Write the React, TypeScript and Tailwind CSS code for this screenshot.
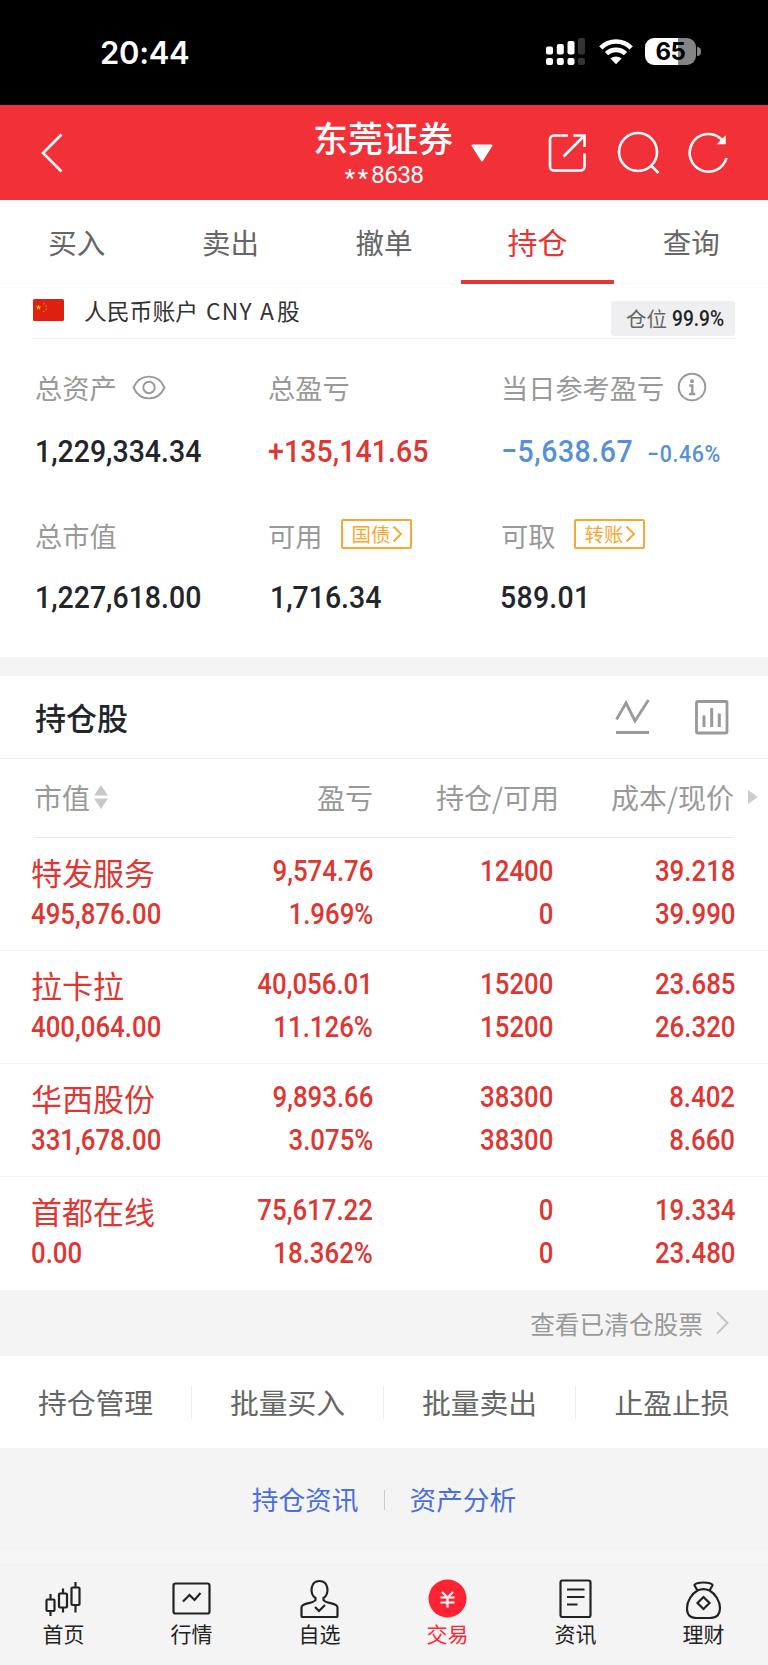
import type { ReactNode } from 'react';
import { clsx } from 'clsx';

const tabs = ['买入', '卖出', '撤单', '持仓', '查询'];

const holdings = [
  { name: '特发服务', value: '495,876.00', profit: '9,574.76', rate: '1.969%', amount: '12400', usable: '0', cost: '39.218', price: '39.990' },
  { name: '拉卡拉', value: '400,064.00', profit: '40,056.01', rate: '11.126%', amount: '15200', usable: '15200', cost: '23.685', price: '26.320' },
  { name: '华西股份', value: '331,678.00', profit: '9,893.66', rate: '3.075%', amount: '38300', usable: '38300', cost: '8.402', price: '8.660' },
  { name: '首都在线', value: '0.00', profit: '75,617.22', rate: '18.362%', amount: '0', usable: '0', cost: '19.334', price: '23.480' },
];

const actions = ['持仓管理', '批量买入', '批量卖出', '止盈止损'];

// Narrow figures, anchored to one side
function Num({ children, right, className }: { children: ReactNode; right?: boolean; className?: string }) {
  return (
    <span
      className={clsx(
        'inline-block whitespace-nowrap font-[Roboto,sans-serif] font-medium scale-x-[0.89]',
        right ? 'origin-right' : 'origin-left',
        className
      )}
    >
      {children}
    </span>
  );
}

function StatusBar() {
  return (
    <div className="h-[105px] bg-black flex items-start justify-between pl-[100px] pr-[67px] text-white font-[Inter,sans-serif]">
      <span className="mt-[33px] text-[31px] leading-[40px] font-semibold tracking-[-0.3px]">20:44</span>
      <div className="mt-[38px] flex items-center">
        <svg width="39" height="27" viewBox="0 0 39 27" fill="#fff">
          <rect x="0" y="8.500" width="7" height="8" rx="2" />
          <rect x="10.800" y="6" width="7" height="10.500" rx="2" />
          <rect x="21.500" y="3" width="7" height="13.500" rx="2" />
          <rect x="32" y="0" width="7" height="16.500" rx="2" fill="#333" />
          <rect x="0" y="20" width="7" height="7" rx="2" />
          <rect x="10.800" y="20" width="7" height="7" rx="2" />
          <rect x="21.500" y="20" width="7" height="7" rx="2" />
          <rect x="32" y="20" width="7" height="7" rx="2" fill="#333" />
        </svg>
        <svg className="ml-[13px]" width="36" height="27" viewBox="0 0 36 27" fill="none" stroke="#fff" strokeWidth="4.600">
          <path d="M2.800 9.800C11.300 1.300 24.700 1.300 33.200 9.800" />
          <path d="M8.500 15.700C13.800 10.600 22.200 10.600 27.500 15.700" />
          <path d="M18 26.200L12.400 20.600C15.600 17.700 20.400 17.700 23.600 20.600Z" fill="#fff" stroke="none" />
        </svg>
        <div className="ml-[11px] w-[51px] h-[27px] rounded-[9px] bg-linear-to-r from-white from-65% to-[#848484] to-65% text-black text-[24px] leading-[28px] font-bold text-center tracking-[-0.5px]">
          65
        </div>
        <div className="ml-[1px] w-[4px] h-[9px] rounded-r-full bg-[#848484]" />
      </div>
    </div>
  );
}

function Header() {
  return (
    <header className="h-[95px] bg-[#f23038] flex items-center text-white">
      <svg className="ml-[40px] shrink-0" width="26" height="40" viewBox="0 0 26 40" fill="none" stroke="#fff" strokeWidth="2.600">
        <path d="M21.500 1.500L3 20L21.500 38.500" />
      </svg>
      <div className="ml-[247px] w-[140px] flex flex-col items-center">
        <h1 className="text-[35px] leading-[40px] font-medium whitespace-nowrap">东莞证券</h1>
        <div className="flex items-center h-[26px] mt-[5px] pl-[2px] leading-[26px]">
          <span className="text-[23px] tracking-[3px] mt-[8px] font-medium font-[Roboto,sans-serif]">**</span>
          <span className="text-[24.500px] font-[Roboto,sans-serif] tracking-[-0.7px]">8638</span>
        </div>
      </div>
      <svg className="ml-[17px] shrink-0" width="24" height="20" viewBox="0 0 24 20" fill="#fff" stroke="#fff" strokeWidth="2" strokeLinejoin="round">
        <path d="M2.500 2.500H21.500L12 17.500Z" />
      </svg>
      <svg className="ml-[54px] shrink-0" width="40" height="40" viewBox="0 0 40 40" fill="none" stroke="#fff" strokeWidth="2.600">
        <path d="M20 2.500H6a4 4 0 0 0-4 4V33.500a4 4 0 0 0 4 4H32.500a4 4 0 0 0 4-4V20.500" />
        <path d="M25.500 2.500H36.500V14M36.500 2.500L15.500 23.500" />
      </svg>
      <svg className="ml-[29px] shrink-0" width="44" height="44" viewBox="0 0 44 44" fill="none" stroke="#fff" strokeWidth="2.600">
        <circle cx="21" cy="21" r="19" />
        <path d="M34 34.500L41.500 42" />
      </svg>
      <svg className="ml-[27px] shrink-0" width="42" height="44" viewBox="0 0 42 44" fill="none" stroke="#fff" strokeWidth="2.600">
        <path d="M38.500 27A18.800 18.800 0 1 1 32 7L36 11" />
        <path d="M37 6V12.500H30.500Z" fill="#fff" strokeWidth="1.500" />
      </svg>
    </header>
  );
}

function Tabs() {
  return (
    <nav className="h-[84px] grid grid-cols-5 border-b border-[#f8f8f8]">
      {tabs.map((t) => (
        <div
          key={t}
          className={clsx(
            'h-[84px] flex justify-center leading-[42px] border-b-4',
            t === '持仓' ? 'pt-[20px] text-[30px] text-[#e63434] border-[#e63434]' : 'pt-[21px] text-[28.500px] text-[#666] border-transparent'
          )}
        >
          {t}
        </div>
      ))}
    </nav>
  );
}

function Account() {
  return (
    <div className="mx-[33px] h-[55px] flex border-b border-[#f0f0f0]">
      <svg className="mt-[15px]" width="31" height="22" viewBox="0 0 31 22">
        <rect width="31" height="22" rx="1.500" fill="#dd2010" />
        <path d="M5.500 5.500L6.200 7.500H8.300L6.700 8.800L7.300 10.900L5.500 9.600L3.700 10.900L4.300 8.800L2.700 7.500H4.800Z" fill="#ffce1a" />
        <g fill="#f08c18">
          <circle cx="10.800" cy="4.800" r="0.800" />
          <circle cx="13" cy="7" r="0.800" />
          <circle cx="13" cy="10.300" r="0.800" />
          <circle cx="10.800" cy="12.500" r="0.800" />
        </g>
      </svg>
      <div className="ml-[20px] mt-[9px] text-[22.800px] leading-[36px] text-[#333] flex whitespace-nowrap">
        <span>人民币账户</span>
        <span className="ml-[8px] tracking-[1.300px]">CNY</span>
        <span className="ml-[7px]">A</span>
        <span className="ml-[3px]">股</span>
      </div>
      <div className="ml-auto mt-[17px] w-[124px] h-[35px] rounded-[3px] bg-[#efeff1] flex items-center pl-[15px]">
        <span className="text-[20.500px] leading-[30px] text-[#666] mt-[-1px]">仓位</span>
        <Num className="ml-[5px] text-[21.500px] leading-[30px] text-[#222]">99.9%</Num>
      </div>
    </div>
  );
}

function LinkTag({ children }: { children: ReactNode }) {
  return (
    <span className="ml-[19px] mt-[-2px] w-[71px] h-[30px] border-2 border-[#f8a832] rounded-[2px] text-[#f8a832] text-[19.500px] leading-[24px] flex items-center pl-[8px]">
      {children}
      <svg className="ml-[2px]" width="11" height="18" viewBox="0 0 11 18" fill="none" stroke="#f8a832" strokeWidth="2">
        <path d="M1.500 1.500L9 9L1.500 16.500" />
      </svg>
    </span>
  );
}

function Stat({ label, extra, children }: { label: string; extra?: ReactNode; children: ReactNode }) {
  return (
    <div className="flex flex-col justify-between">
      <div className="h-[40px] flex items-center text-[27.200px] text-[#999] whitespace-nowrap">
        {label}
        {extra}
      </div>
      <div className="h-[40px] flex items-center text-[32px] leading-[40px]">{children}</div>
    </div>
  );
}

function Summary() {
  return (
    <section className="h-[318px] pl-[35px] pt-[28px] text-[#22262b] grid grid-cols-[233px_233px_1fr] grid-rows-[104px_102px] gap-y-[44px] content-start">
      <Stat
        label="总资产"
        extra={
          <svg className="ml-[15px]" width="34" height="25" viewBox="0 0 34 25" fill="none" stroke="#999" strokeWidth="1.900">
            <path d="M1.500 12.500C8 -2 26 -2 32.500 12.500C26 27 8 27 1.500 12.500Z" />
            <circle cx="17" cy="12.500" r="5.700" />
          </svg>
        }
      >
        <Num>1,229,334.34</Num>
      </Stat>
      <Stat label="总盈亏">
        <Num className="text-[#e03632] tracking-[0.100px]">+135,141.65</Num>
      </Stat>
      <Stat
        label="当日参考盈亏"
        extra={
          <svg className="ml-[13px]" width="30" height="30" viewBox="0 0 30 30" fill="none" stroke="#999" strokeWidth="2">
            <circle cx="15" cy="15" r="13.300" />
            <circle cx="15" cy="9.300" r="2" fill="#999" stroke="none" />
            <path d="M12.300 13.500H15.300V22M12 22H18.300" strokeWidth="2.400" />
          </svg>
        }
      >
        <Num className="text-[#5690d8] tracking-[0.600px]">−5,638.67</Num>
        <Num className="ml-[-3px] text-[#5690d8] text-[24px] mt-[5px] tracking-[0.700px]">−0.46%</Num>
      </Stat>
      <Stat label="总市值">
        <Num>1,227,618.00</Num>
      </Stat>
      <Stat label="可用" extra={<LinkTag>国债</LinkTag>}>
        <Num className="ml-[2px]">1,716.34</Num>
      </Stat>
      <Stat label="可取" extra={<LinkTag>转账</LinkTag>}>
        <Num className="ml-[-1px] tracking-[0.300px]">589.01</Num>
      </Stat>
    </section>
  );
}

function Holdings() {
  return (
    <section>
      <div className="h-[83px] flex items-center pl-[35px] pr-[39px] border-b border-[#f2f2f2]">
        <h2 className="text-[31px] leading-[44px] font-medium text-[#22262b]">持仓股</h2>
        <svg className="ml-auto" width="35" height="36" viewBox="0 0 35 36" fill="none" stroke="#999" strokeWidth="2.800">
          <path d="M1.500 20.500L11 4L20 22L33.500 1M1 33.500H34" />
        </svg>
        <svg className="ml-[44px]" width="35" height="36" viewBox="0 0 35 36" fill="none" stroke="#999" strokeWidth="3">
          <rect x="2.500" y="2.500" width="30.500" height="31.500" rx="1" strokeWidth="2.800" />
          <path d="M10 16.500V28M17.700 9V28M25.300 14.500V28" />
        </svg>
      </div>
      <div className="h-[78px] pb-[2px] flex items-center text-[28px] leading-[40px] text-[#999] whitespace-nowrap">
        <div className="w-[172px] pl-[34px] flex items-center">
          市值
          <svg className="ml-[4px]" width="14" height="24" viewBox="0 0 14 24" fill="#c8c8c8">
            <path d="M7 0L14 10.500H0ZM7 24L14 13.500H0Z" />
          </svg>
        </div>
        <div className="w-[201px] text-right">盈亏</div>
        <div className="w-[186px] text-right">持仓/可用</div>
        <div className="w-[175px] text-right">成本/现价</div>
        <svg className="ml-[14px]" width="10" height="14" viewBox="0 0 10 14" fill="#ccc">
          <path d="M0 0L10 7L0 14Z" />
        </svg>
      </div>
      <div className="mx-[34px] h-px bg-[#e8e8e8]" />
      {holdings.map((h) => (
        <div
          key={h.name}
          className="h-[113px] pt-[12px] flex border-b border-[#f4f4f4] last:border-b-0 text-[#e03632] text-[29px] leading-[43px]"
        >
          <div className="w-[172px] pl-[31px] flex flex-col items-start whitespace-nowrap">
            <span className="h-[43px] text-[31px]">{h.name}</span>
            <Num>{h.value}</Num>
          </div>
          <div className="w-[201px] flex flex-col items-end">
            <Num right>{h.profit}</Num>
            <Num right>{h.rate}</Num>
          </div>
          <div className="w-[180px] flex flex-col items-end">
            <Num right>{h.amount}</Num>
            <Num right>{h.usable}</Num>
          </div>
          <div className="w-[182px] flex flex-col items-end">
            <Num right>{h.cost}</Num>
            <Num right>{h.price}</Num>
          </div>
        </div>
      ))}
    </section>
  );
}

function BottomNav() {
  const items = [
    {
      label: '首页',
      icon: (
        <>
          <path d="M6.500 15V21M6.500 32V37M19 9.500V15M19 28.500V33.500M31.500 3V9M31.500 26V33.500" />
          <rect x="2.500" y="20.500" width="8" height="11.500" rx="1" />
          <rect x="15" y="14.500" width="8" height="14" rx="1" />
          <rect x="27.500" y="8.500" width="8" height="17.500" rx="1" />
        </>
      ),
    },
    {
      label: '行情',
      icon: (
        <>
          <rect x="1.500" y="4.500" width="36" height="30" rx="2" />
          <path d="M11 22.500L17.500 16L22.500 21L28.500 14" />
        </>
      ),
    },
    {
      label: '自选',
      icon: (
        <>
          <path d="M15.500 19C9.500 15 10 2 19.500 2S29.500 15 23.500 19V21C26 25 37.500 23.500 37.500 28.500V36.500a1.500 1.500 0 0 1-1.500 1.500H3a1.500 1.500 0 0 1-1.500-1.500V28.500C1.500 23.500 13 25 15.500 21Z" />
          <path d="M15 28L19 32L25 26" />
        </>
      ),
    },
    {
      label: '交易',
      active: true,
      icon: (
        <>
          <circle cx="19.500" cy="19.500" r="19" fill="#ff2334" stroke="none" />
          <path d="M14 13L19.500 18.500L25 13M12.500 18.500H26.500M12.500 23.500H26.500M19.500 18.500V28.500" stroke="#fff" />
        </>
      ),
    },
    {
      label: '资讯',
      icon: (
        <>
          <rect x="4.500" y="1.500" width="30" height="36.500" rx="2" />
          <path d="M11 10.500H28.500M11 18H28.500M11 25.500H21.500" />
        </>
      ),
    },
    {
      label: '理财',
      icon: (
        <>
          <path d="M13.500 11.500L10.500 6.500C10 2.500 29 2.500 28.500 6.500L25.500 11.500" />
          <path d="M13.500 11.500C17 9.800 22 9.800 25.500 11.500C31 14.500 36 22 36 29C36 36 33 39 26 39H13C6 39 3 36 3 29C3 22 8 14.500 13.500 11.500Z" />
          <path d="M19.500 18L25.500 24L19.500 30L13.500 24Z" />
        </>
      ),
    },
  ];

  return (
    <nav className="h-[101px] grid grid-cols-6 border-t border-[#f1f1f1] pt-[14px]">
      {items.map((item) => (
        <div key={item.label} className="flex flex-col items-center pr-px">
          <svg width="39" height="40" viewBox="0 0 39 40" fill="none" stroke="#222" strokeWidth="2.200">
            {item.icon}
          </svg>
          <span className={clsx('mt-px text-[21px] leading-[26px]', item.active ? 'text-[#ff2334]' : 'text-[#222]')}>
            {item.label}
          </span>
        </div>
      ))}
    </nav>
  );
}

export default function App() {
  return (
    <main className="w-[768px] h-[1665px] overflow-hidden bg-[#f4f4f4] font-['Noto_Sans_CJK_SC',sans-serif]">
      <StatusBar />
      <Header />
      <div className="bg-white">
        <Tabs />
        <Account />
        <Summary />
      </div>
      <div className="h-[19px]" />
      <div className="bg-white">
        <Holdings />
      </div>
      <div className="h-[66px] flex items-center justify-end pr-[39px] text-[24.700px] leading-[36px] text-[#999]">
        查看已清仓股票
        <svg className="ml-[12px]" width="14" height="24" viewBox="0 0 14 24" fill="none" stroke="#c4c4c4" strokeWidth="2">
          <path d="M2 1.500L12.500 12L2 22.500" />
        </svg>
      </div>
      <div className="h-[92px] bg-white grid grid-cols-4">
        {actions.map((a) => (
          <div key={a} className="flex items-center">
            <span className="flex-1 text-center text-[28.800px] leading-[42px] text-[#666]">{a}</span>
            {a !== '止盈止损' && <span className="w-px h-[33px] bg-[#eee]" />}
          </div>
        ))}
      </div>
      <div className="h-[100px] flex justify-center pt-[31px] text-[26.700px] leading-[40px] text-[#4a6fdc]">
        <span>持仓资讯</span>
        <span className="mx-[25px] mt-[11px] w-px h-[20px] bg-[#ccc]" />
        <span>资产分析</span>
      </div>
      <div className="h-[16px] border-t border-[#f2f2f2] bg-[#f5f5f5]" />
      <BottomNav />
    </main>
  );
}
